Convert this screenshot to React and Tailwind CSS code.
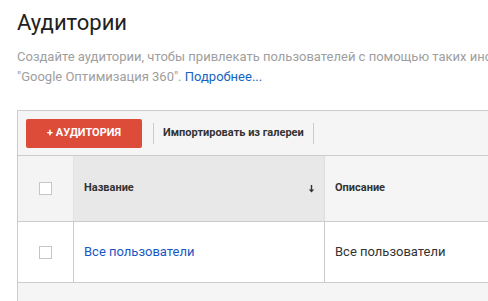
export default function App() {
  return (
    <div className="w-[488px] h-[301px] overflow-hidden bg-white font-['Roboto',sans-serif]">
      <div className="pl-[17px] pt-[9px]">
        <h1 className="text-[22px] leading-[28px] text-[#212121]">Аудитории</h1>
        <p className="mt-[10px] text-[13px] leading-[20px] text-[#9e9e9e] whitespace-nowrap">
          Создайте аудитории, чтобы привлекать пользователей с помощью таких инструментов, как Google Реклама и
          <br />
          "Google Оптимизация 360". <span className="text-[#1565c0]">Подробнее...</span>
        </p>
      </div>

      <div className="mt-[23px] ml-[17px] w-[600px] border-l border-t border-[#cccccc] bg-[#f5f5f5]">
        {/* toolbar */}
        <div className="h-[45px] flex items-center border-b border-[#cccccc]">
          <button className="ml-[8px] w-[116px] h-[29px] rounded-[2px] bg-[#dd4b39] text-white text-[11px] font-bold">
            + АУДИТОРИЯ
          </button>
          <div className="ml-[11px] w-px h-[21px] bg-[#cccccc]"></div>
          <span className="ml-[9px] text-[11px] font-bold text-[#333]">Импортировать из галереи</span>
          <div className="ml-[9px] w-px h-[21px] bg-[#cccccc]"></div>
        </div>

        {/* header */}
        <div className="flex h-[66px] border-b border-[#cccccc]">
          <div className="w-[56px] shrink-0 flex items-center justify-center bg-[#f4f4f4] border-r border-[#e4e4e4]">
            <div className="w-[13px] h-[13px] border border-[#c6c6c6] bg-white"></div>
          </div>
          <div className="w-[251px] shrink-0 flex items-center justify-between pl-[10px] pr-[9px] bg-[#e8e8e8] border-r border-[#dedede]">
            <span className="text-[11px] font-bold text-[#333]">Название</span>
            <svg width="7" height="8" viewBox="0 0 7 8" className="mt-[1px]">
              <path d="M3.5 0v5" stroke="#333" strokeWidth="1.4" />
              <path d="M0.8 4.5h5.4L3.5 7.5z" fill="#333" />
            </svg>
          </div>
          <div className="flex-1 flex items-center pl-[10px]">
            <span className="text-[11px] font-bold text-[#333]">Описание</span>
          </div>
        </div>

        {/* row */}
        <div className="flex h-[61px] bg-white border-b border-[#cccccc]">
          <div className="w-[56px] shrink-0 flex items-center justify-center border-r border-[#cccccc]">
            <div className="w-[13px] h-[13px] border border-[#c6c6c6] bg-white"></div>
          </div>
          <div className="w-[251px] shrink-0 flex items-center pl-[10px] border-r border-[#cccccc]">
            <span className="text-[13px] text-[#1a57c4]">Все пользователи</span>
          </div>
          <div className="flex-1 flex items-center pl-[10px]">
            <span className="text-[13px] text-[#333]">Все пользователи</span>
          </div>
        </div>

        <div className="h-[40px]"></div>
      </div>
    </div>
  );
}
